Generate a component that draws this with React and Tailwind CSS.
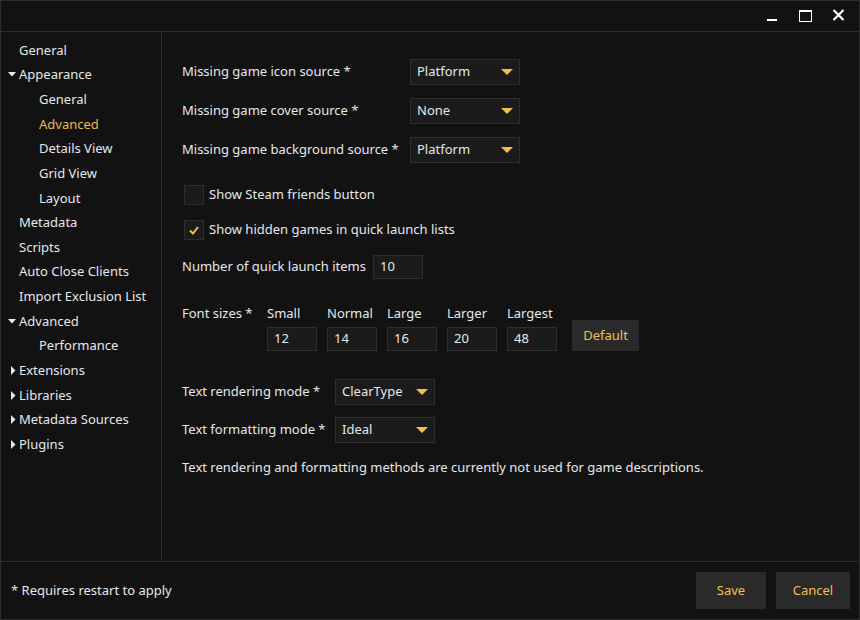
import React from "react";

const Y = "#f2c04a";

function Caret({ open }) {
  return open ? (
    <svg width="8" height="5" viewBox="0 0 8 5" className="absolute left-[7px] top-[10px]">
      <path d="M0 0 L8 0 L4 4.5 Z" fill="#e8e8e8" />
    </svg>
  ) : (
    <svg width="5" height="9" viewBox="0 0 5 9" className="absolute left-[10px] top-[8px]">
      <path d="M0 0 L4.5 4.5 L0 9 Z" fill="#e8e8e8" />
    </svg>
  );
}

function NavItem({ label, level = 0, caret, active }) {
  return (
    <div
      className={`relative h-[24.65px] leading-[24.65px] whitespace-nowrap ${level ? "pl-[38px]" : "pl-[18px]"} ${active ? "text-[#f0b84a]" : "text-[#e6e8ea]"}`}
    >
      {caret !== undefined && <Caret open={caret} />}
      {label}
    </div>
  );
}

function Arrow() {
  return (
    <svg width="12" height="6" viewBox="0 0 12 6">
      <path d="M0 0 L12 0 L6 6 Z" fill={Y} />
    </svg>
  );
}

function Select({ value, w }) {
  return (
    <div
      className={`${w} h-[26px] flex items-center justify-between pl-[6px] pr-[6px] bg-[#1b1b1b] border border-[#2e2e2e] text-[#e6e8ea]`}
    >
      <span>{value}</span>
      <Arrow />
    </div>
  );
}

function Check({ checked, label }) {
  return (
    <div className="flex items-center h-[20px]">
      <div className="ml-[2px] w-[20px] h-[20px] bg-[#1b1b1b] border border-[#2e2e2e] flex items-center justify-center">
        {checked && (
          <svg width="10" height="9" viewBox="0 0 10 9">
            <path d="M1 4.5 L4 7.5 L9 1" stroke={Y} strokeWidth="2" fill="none" />
          </svg>
        )}
      </div>
      <span className="ml-[5px] text-[#e6e8ea]">{label}</span>
    </div>
  );
}

function Input({ value, w = "w-[50px]", h = "h-[24px]" }) {
  return (
    <div className={`${w} ${h} flex items-center pl-[6px] bg-[#1b1b1b] border border-[#2e2e2e] text-[#e6e8ea]`}>
      {value}
    </div>
  );
}

export default function App() {
  const sizes = [
    ["Small", "12"],
    ["Normal", "14"],
    ["Large", "16"],
    ["Larger", "20"],
    ["Largest", "48"],
  ];
  return (
    <div
      className="w-[860px] h-[620px] bg-[#121212] border border-[#2d2d2d] flex flex-col text-[13px] text-[#e6e8ea]"
      style={{ fontFamily: '"Noto Sans", "Open Sans", sans-serif' }}
    >
      {/* title bar */}
      <div className="h-[31px] border-b border-[#2d2d2d] flex items-start justify-end shrink-0">
        <div className="w-[10px] h-[2px] bg-white mt-[18px] mr-[22px]" />
        <div className="w-[13px] h-[12px] border border-white border-t-2 mt-[9px] mr-[20px]" />
        <svg width="13" height="12" viewBox="0 0 13 12" className="mt-[8px] mr-[14px]">
          <path d="M1.5 1 L11.5 11 M11.5 1 L1.5 11" stroke="white" strokeWidth="2.2" />
        </svg>
      </div>

      <div className="flex flex-1 min-h-0">
        {/* sidebar */}
        <div className="w-[161px] border-r border-[#2d2d2d] pt-[5.7px] shrink-0">
          <NavItem label="General" />
          <NavItem label="Appearance" caret={true} />
          <NavItem label="General" level={1} />
          <NavItem label="Advanced" level={1} active />
          <NavItem label="Details View" level={1} />
          <NavItem label="Grid View" level={1} />
          <NavItem label="Layout" level={1} />
          <NavItem label="Metadata" />
          <NavItem label="Scripts" />
          <NavItem label="Auto Close Clients" />
          <NavItem label="Import Exclusion List" />
          <NavItem label="Advanced" caret={true} />
          <NavItem label="Performance" level={1} />
          <NavItem label="Extensions" caret={false} />
          <NavItem label="Libraries" caret={false} />
          <NavItem label="Metadata Sources" caret={false} />
          <NavItem label="Plugins" caret={false} />
        </div>

        {/* content */}
        <div className="flex-1 pl-[20px] pt-[27px] flex flex-col">
          <div className="flex flex-col gap-[13px]">
            {[
              ["Missing game icon source *", "Platform"],
              ["Missing game cover source *", "None"],
              ["Missing game background source *", "Platform"],
            ].map(([l, v]) => (
              <div key={l} className="flex items-center">
                <div className="w-[228px]">{l}</div>
                <Select value={v} w="w-[110px]" />
              </div>
            ))}
          </div>

          <div className="mt-[22px]">
            <Check label="Show Steam friends button" />
          </div>
          <div className="mt-[15px]">
            <Check checked label="Show hidden games in quick launch lists" />
          </div>

          <div className="mt-[15px] flex items-center">
            <div className="w-[191px]">Number of quick launch items</div>
            <Input value="10" />
          </div>

          <div className="mt-[24px] flex">
            <div className="w-[85px] leading-[20px]">Font sizes *</div>
            <div className="flex gap-[10px]">
              {sizes.map(([l, v]) => (
                <div key={l} className="flex flex-col">
                  <div className="leading-[20px] h-[20px]">{l}</div>
                  <div className="mt-[4px]">
                    <Input value={v} />
                  </div>
                </div>
              ))}
            </div>
            <div className="ml-[15px] mt-[17px] w-[67px] h-[31px] bg-[#2a2a2a] flex items-center justify-center text-[#f2c04a]">
              Default
            </div>
          </div>

          <div className="mt-[28px] flex flex-col gap-[12px]">
            {[
              ["Text rendering mode *", "ClearType"],
              ["Text formatting mode *", "Ideal"],
            ].map(([l, v]) => (
              <div key={l} className="flex items-center">
                <div className="w-[153px]">{l}</div>
                <Select value={v} w="w-[100px]" />
              </div>
            ))}
          </div>

          <div className="mt-[15px]">
            Text rendering and formatting methods are currently not used for game descriptions.
          </div>
        </div>
      </div>

      {/* footer */}
      <div className="h-[58px] border-t border-[#2d2d2d] shrink-0 flex items-center pl-[10px] pr-[9px]">
        <div className="flex-1">* Requires restart to apply</div>
        <div className="w-[70px] h-[37px] bg-[#2a2a2a] flex items-center justify-center text-[#f2c04a]">Save</div>
        <div className="ml-[10px] w-[74px] h-[37px] bg-[#2a2a2a] flex items-center justify-center text-[#f2c04a]">Cancel</div>
      </div>
    </div>
  );
}
